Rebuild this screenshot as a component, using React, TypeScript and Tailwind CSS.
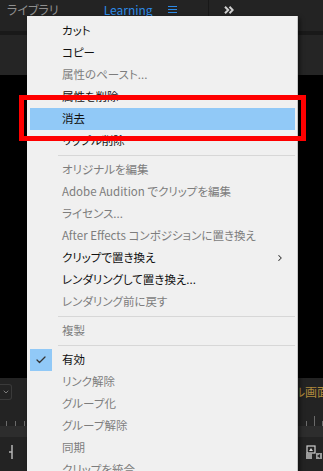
import { ChevronRight, Check, ChevronDown } from 'lucide-react'

type Item =
  | { kind: 'item'; label: string; disabled?: boolean; active?: boolean; checked?: boolean; submenu?: boolean }
  | { kind: 'sep' }

const items: Item[] = [
  { kind: 'item', label: 'カット' },
  { kind: 'item', label: 'コピー' },
  { kind: 'item', label: '属性のペースト...', disabled: true },
  { kind: 'item', label: '属性を削除' },
  { kind: 'item', label: '消去', active: true },
  { kind: 'item', label: 'リップル削除' },
  { kind: 'sep' },
  { kind: 'item', label: 'オリジナルを編集', disabled: true },
  { kind: 'item', label: 'Adobe Audition でクリップを編集', disabled: true },
  { kind: 'item', label: 'ライセンス...', disabled: true },
  { kind: 'item', label: 'After Effects コンポジションに置き換え', disabled: true },
  { kind: 'item', label: 'クリップで置き換え', submenu: true },
  { kind: 'item', label: 'レンダリングして置き換え...' },
  { kind: 'item', label: 'レンダリング前に戻す', disabled: true },
  { kind: 'sep' },
  { kind: 'item', label: '複製', disabled: true },
  { kind: 'sep' },
  { kind: 'item', label: '有効', checked: true },
  { kind: 'item', label: 'リンク解除', disabled: true },
  { kind: 'item', label: 'グループ化', disabled: true },
  { kind: 'item', label: 'グループ解除', disabled: true },
  { kind: 'item', label: '同期', disabled: true },
  { kind: 'item', label: 'クリップを統合', disabled: true },
]

function ContextMenu() {
  return (
    <div className="absolute left-[27px] top-[16px] w-[271px] h-[470px] bg-[#f0f0f0] border-r border-[#c6c6c6] pt-[4px] pl-[3px] pr-[2px] shadow-[2px_2px_4px_rgba(0,0,0,0.5)]">
      {items.map((item, i) => {
        if (item.kind === 'sep') {
          return (
            <div key={i} className="h-[7px] flex items-center pl-[28px]">
              <div className="h-px w-full bg-[#d7d7d7]" />
            </div>
          )
        }
        return (
          <div
            key={i}
            className={`relative h-[22px] flex items-center pl-[32px] pr-[10px] text-[11.5px] leading-none ${
              item.active ? 'bg-[#91c9f7]' : ''
            } ${item.disabled ? 'text-[#7d7d7d]' : 'text-[#111]'}`}
          >
            {item.checked && (
              <div className="absolute left-0 top-0 w-[22px] h-[22px] bg-[#91c9f7] flex items-center justify-center">
                <Check className="w-[12px] h-[12px] text-[#333]" strokeWidth={2.5} />
              </div>
            )}
            <span className="flex-1 whitespace-nowrap">{item.label}</span>
            {item.submenu && <ChevronRight className="w-[10px] h-[10px] text-[#333]" strokeWidth={2.5} />}
          </div>
        )
      })}
    </div>
  )
}

export default function App() {
  return (
    <div
      className="relative w-[323px] h-[471px] overflow-hidden bg-black flex flex-col [font-feature-settings:'palt']"
      style={{ fontFamily: '"Noto Sans CJK JP", "Noto Sans", sans-serif' }}
    >
      {/* top panel tabs */}
      <div className="h-[31px] bg-[#232323] flex items-center text-[12px] shrink-0">
        <span className="ml-[7px] text-[#8f8f8f] pb-[12px]">ライブラリ</span>
        <span className="ml-[45px] text-[#2d8ae6] pb-[12px]">Learning</span>
        <svg width="9" height="9" viewBox="0 0 9 9" className="ml-[15px] mb-[12px]">
          <path d="M0 1.5h9M0 4.5h9M0 7.5h9" stroke="#2d8ae6" strokeWidth="1.2" />
        </svg>
        <div className="ml-[31px] w-px h-full bg-[#181818]" />
        <svg width="10" height="8" viewBox="0 0 10 8" className="ml-[15px] mb-[12px]">
          <path d="M1 0.8l3.2 3.2-3.2 3.2M5.5 0.8l3.2 3.2-3.2 3.2" fill="none" stroke="#cfcfcf" strokeWidth="2" />
        </svg>
      </div>
      <div className="h-[4px] bg-[#191919] shrink-0" />
      <div className="h-[40px] bg-[#252525] shrink-0" />
      <div className="flex-1 bg-black" />

      {/* timeline panel */}
      <div className="h-[93px] bg-[#232323] shrink-0 flex flex-col">
        <div className="h-[39px] flex items-start justify-between pt-[6px]">
          <div className="w-[12px] h-[16px] border border-[#3a3a3a] rounded-r-[3px] border-l-0 flex items-center justify-center">
            <ChevronDown className="w-[8px] h-[8px] text-[#aaa]" />
          </div>
          <span className="text-[12px] leading-[16px] text-[#b08a3c] mr-[-6px] whitespace-nowrap">ル画面</span>
        </div>
        <div className="h-[9px] flex items-end justify-between px-[6px]">
          <div className="flex gap-[8px] items-end">
            <div className="w-px h-[5px] bg-[#6a6a6a]" />
            <div className="w-px h-[5px] bg-[#6a6a6a]" />
            <div className="w-px h-[5px] bg-[#6a6a6a]" />
          </div>
          <div className="flex gap-[7px] items-end mr-[-6px]">
            <div className="w-px h-[5px] bg-[#6a6a6a]" />
            <div className="w-px h-[10px] bg-[#6a6a6a]" />
            <div className="w-px h-[5px] bg-[#6a6a6a]" />
          </div>
        </div>
        <div className="h-[11px] bg-[#2d2d2d]" />
        <div className="flex-1 flex items-center justify-between px-[9px] pb-[4px]">
          <svg width="4" height="14" viewBox="0 0 4 14">
            <path d="M3 0v14M3 7h-3" stroke="#b5b5b5" strokeWidth="1.5" />
          </svg>
          <svg width="16" height="14" viewBox="0 0 16 14" className="mr-[-8px]">
            <rect x="1" y="1" width="8" height="7" fill="none" stroke="#cfcfcf" strokeWidth="1.2" />
            <path d="M5 3l-2 3h4z" fill="#cfcfcf" />
            <path d="M0 8h6v6h-6zM10 8h6v6h-6z" fill="#9a9a9a" />
            <path d="M14 9l-3 2 3 2z" fill="#232323" />
          </svg>
        </div>
      </div>

      <ContextMenu />

      {/* red annotation frame */}
      <div className="absolute left-[19px] top-[95px] w-[287px] h-[46px] border-[5px] border-[#ff0000]" />
    </div>
  )
}
